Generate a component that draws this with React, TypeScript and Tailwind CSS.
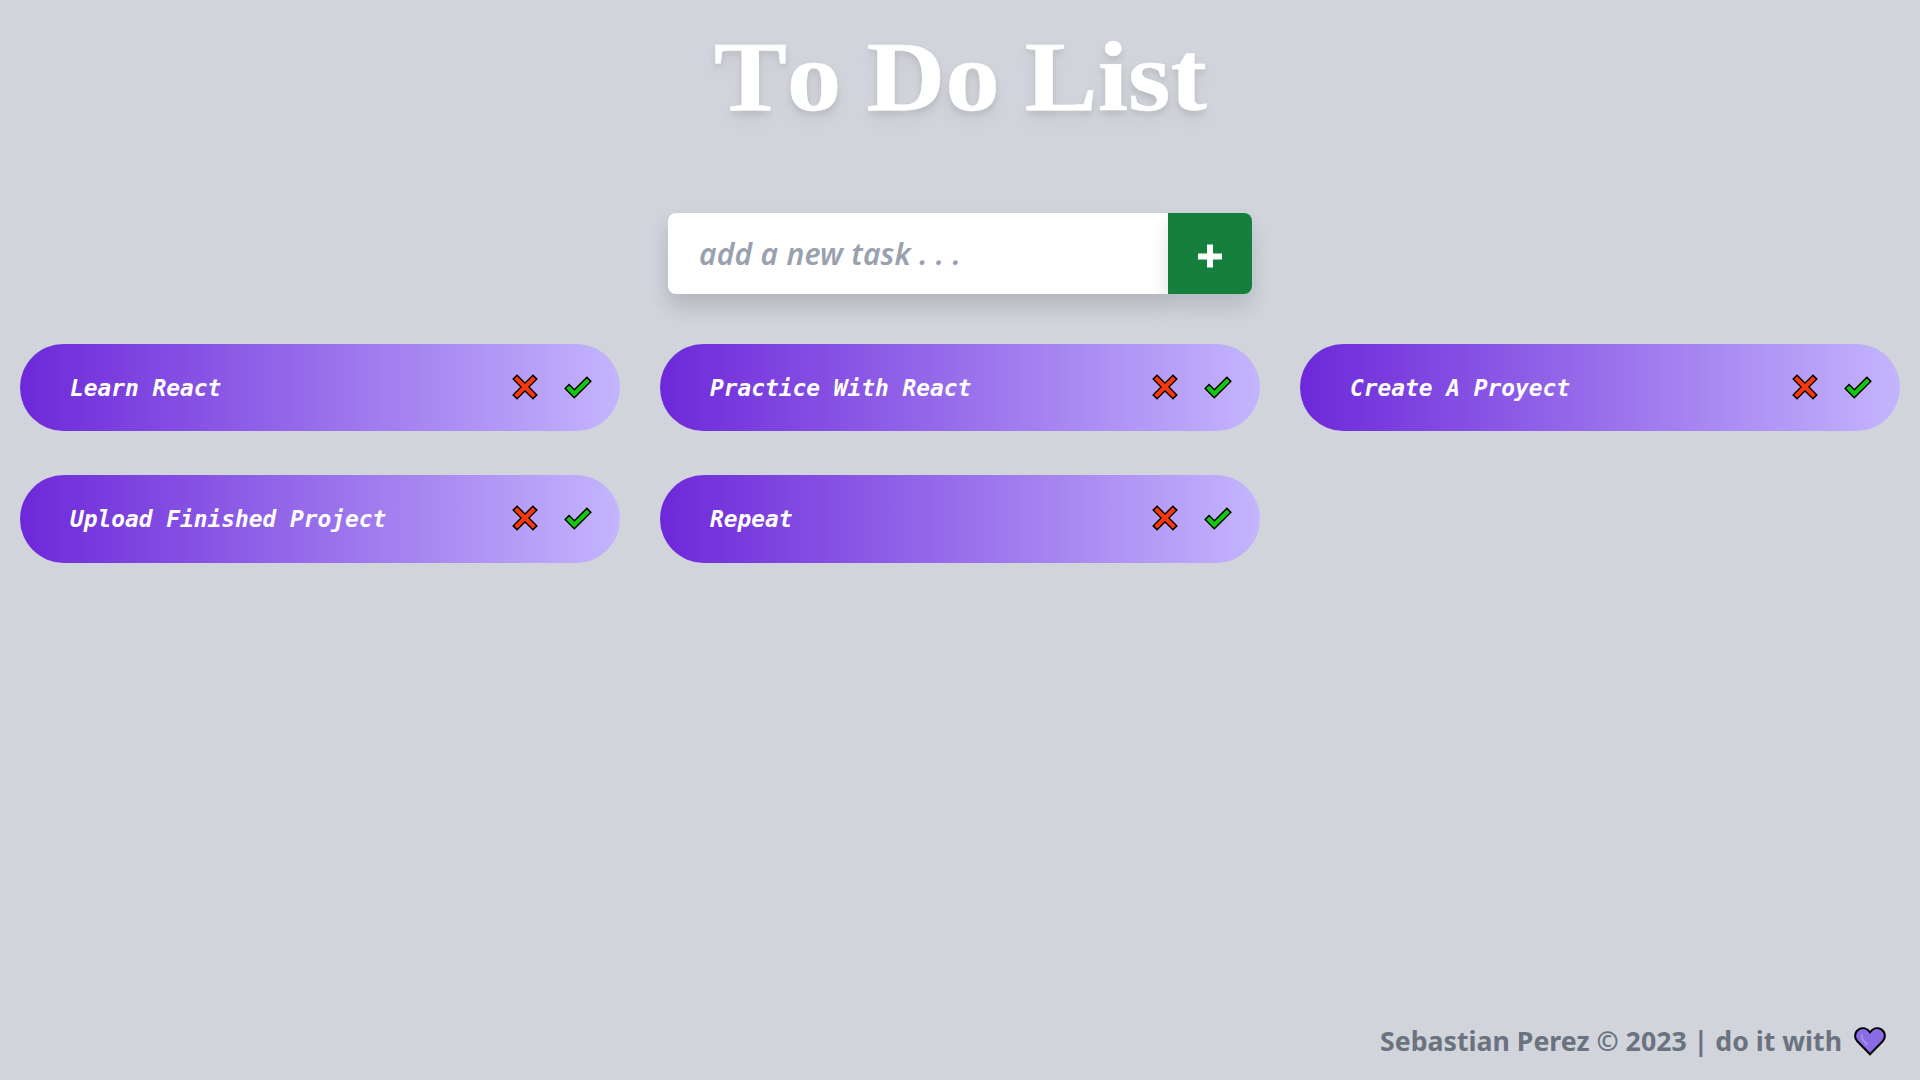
import React from "react";

const tasks = [
  "Learn React",
  "Practice With React",
  "Create A Proyect",
  "Upload Finished Project",
  "Repeat",
];

function CrossIcon() {
  return (
    <svg className="h-[26px] w-[26px]" viewBox="0 0 26 26" fill="none">
      <path d="M2.6 2.6 23.4 23.4M23.4 2.6 2.6 23.4" stroke="#000" strokeWidth="7" />
      <path d="M3.7 3.7 22.3 22.3M22.3 3.7 3.7 22.3" stroke="#f9380e" strokeWidth="4.2" />
    </svg>
  );
}

function CheckIcon() {
  return (
    <svg className="h-[23px] w-[28px]" viewBox="0 0 28 23" fill="none">
      <path d="M2.6 10 10.3 17.7 25.4 2.8" stroke="#000" strokeWidth="7" />
      <path d="M3.7 11.1 10.3 17.7 24.3 3.9" stroke="#12c912" strokeWidth="4.2" />
    </svg>
  );
}

function HeartIcon() {
  return (
    <svg className="h-[29px] w-8" viewBox="0 0 32 29" fill="none">
      <path
        d="M16 27.2 3.3 14.3C-.2 10.5.8 4.7 4.7 2.4 8.8 0 13.2 1.2 16 5.3 18.8 1.2 23.2 0 27.3 2.4 31.2 4.7 32.2 10.5 28.7 14.3Z"
        fill="#896ce4"
        stroke="#000"
        strokeWidth="2"
      />
      <path d="M7.8 8c-.5 3.6 1.7 6.4 5.2 9.4" stroke="#a48ee9" strokeWidth="2.2" strokeLinecap="round" />
    </svg>
  );
}

function Task({ name }: { name: string }) {
  return (
    <li className="flex h-[87.5px] items-center rounded-full bg-[linear-gradient(to_right,#6d28d9,#c4b5fd)] pr-7 pl-[50px] text-white">
      <span className="flex-1 font-['DejaVu_Sans_Mono',monospace] text-[22.85px] leading-8 font-bold whitespace-nowrap italic">
        {name}
      </span>
      <button className="mr-[26px] mb-px" aria-label="Delete task"><CrossIcon /></button>
      <button className="mb-px" aria-label="Complete task"><CheckIcon /></button>
    </li>
  );
}

export default function App() {
  return (
    <div className="flex h-screen flex-col overflow-hidden bg-[#d1d5db] font-['Noto_Sans',sans-serif]">
      <h1 className="mt-[21px] flex h-[112px] justify-center font-['Liberation_Serif',serif] text-[98.5px] leading-[112px] font-bold text-white [filter:drop-shadow(0_10px_8px_rgb(0_0_0/0.04))_drop-shadow(0_4px_3px_rgb(0_0_0/0.1))]">
        <span className="origin-center scale-x-[1.108] whitespace-nowrap [font-kerning:none] [-webkit-text-stroke:0.5px_#fff] [word-spacing:-2px]">To Do List</span>
      </h1>
      <form className="mx-auto mt-20 flex h-[81px] w-[584px] shrink-0">
        <input
          className="w-[500px] rounded-l-lg bg-white pl-[31px] text-[30px] font-semibold tracking-[0.16px] italic shadow-[0_10px_20px_rgb(0_0_0/0.13),0_20px_26px_rgb(0_0_0/0.03)] [word-spacing:0.3px] placeholder:text-gray-400"
          placeholder="add a new task . . ."
        />
        <button type="button" className="flex w-[84px] items-center justify-center rounded-r-lg bg-[#15803d] shadow-[0_10px_20px_rgb(0_0_0/0.1),0_20px_26px_rgb(0_0_0/0.03)]" aria-label="Add task">
          <svg className="mt-[4px] h-6 w-6" viewBox="0 0 24 24" stroke="#fff" strokeWidth="6">
            <path d="M12 0.5V23.5M0 12.5H24" />
          </svg>
        </button>
      </form>
      <ul className="mx-5 mt-[49.75px] grid grid-cols-3 gap-x-10 gap-y-[43.75px]">
        {tasks.map((name) => <Task key={name} name={name} />)}
      </ul>
      <footer className="mt-auto mr-[34.5px] mb-[19px] flex h-10 items-center justify-end text-[26.7px] font-bold text-[#6b7280]">
        <span className="mr-[11.5px] whitespace-nowrap">Sebastian Perez © 2023 | do it with</span>
        <HeartIcon />
      </footer>
    </div>
  );
}
